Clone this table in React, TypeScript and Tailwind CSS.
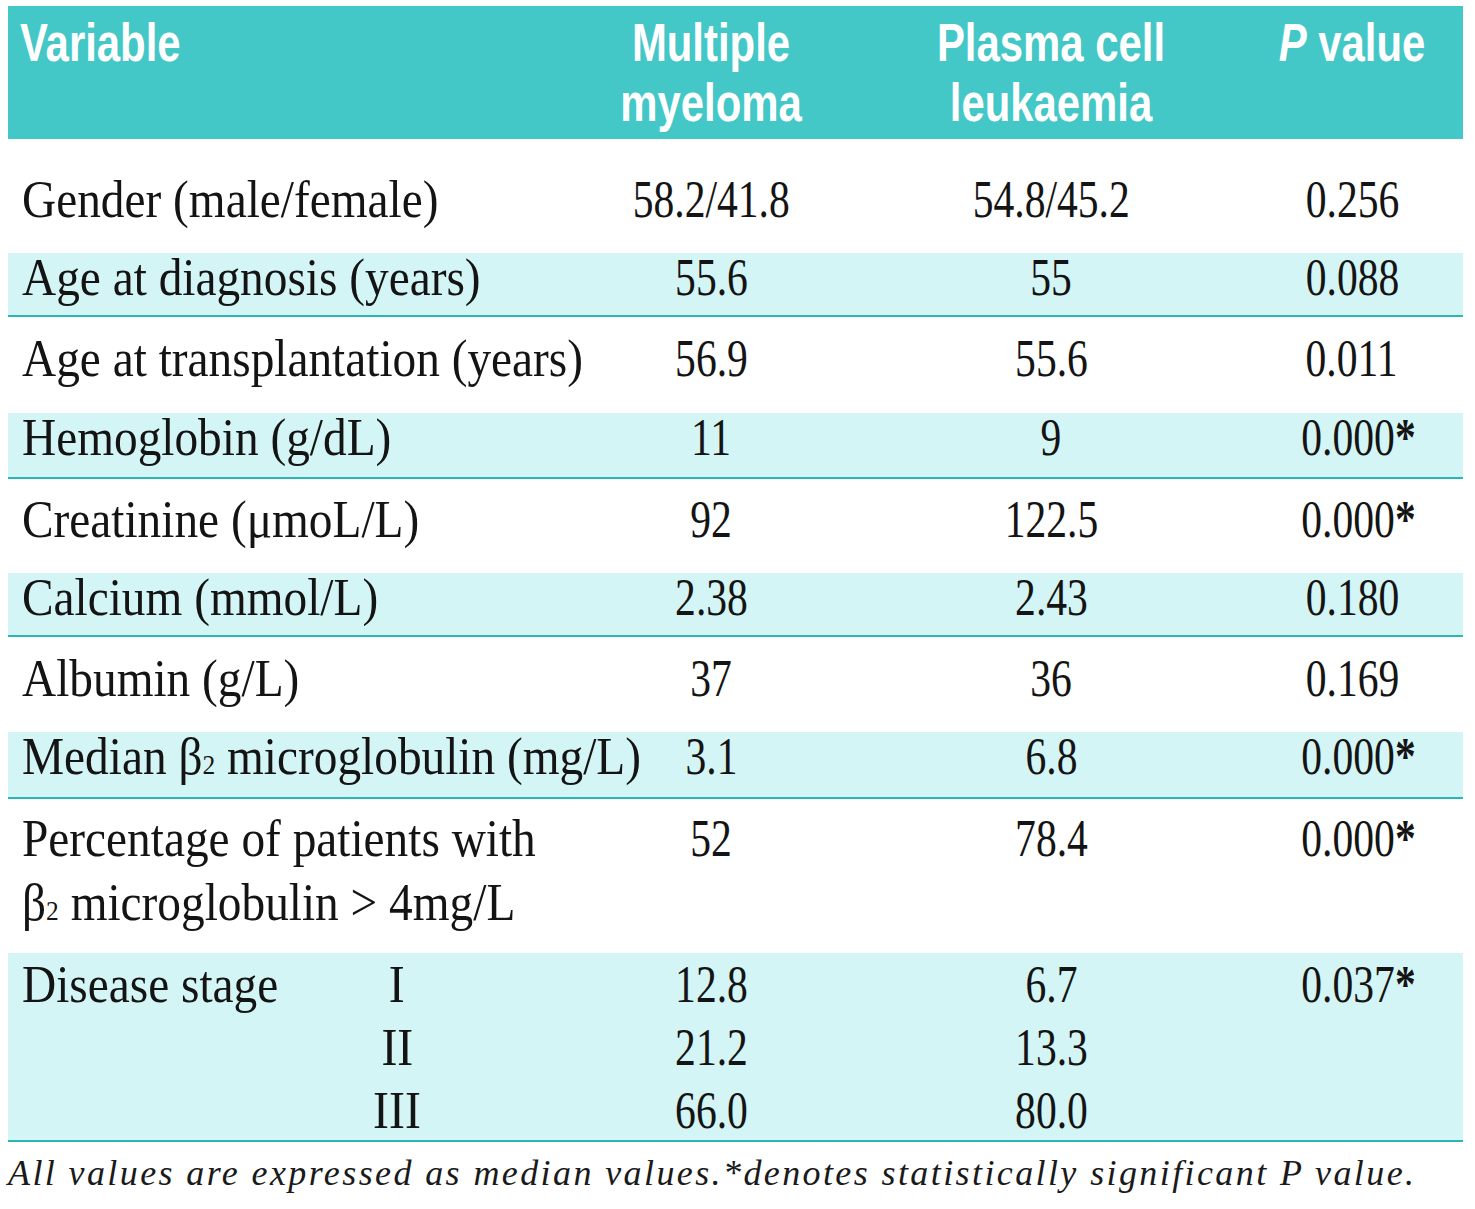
import React from 'react';

type Row = {
    label: React.ReactNode;
    mm: string;
    pcl: string;
    p: string;
    cls: string;
};

const Beta = () => (
    <>
        β<span className="text-[28px]">2</span>
    </>
);

const light = 'bg-[#d4f5f5] border-b-2 border-[#2bb6b6]';

const rows: Row[] = [
    { label: 'Gender (male/female)', mm: '58.2/41.8', pcl: '54.8/45.2', p: '0.256', cls: 'h-[114px] pt-[36px]' },
    { label: 'Age at diagnosis (years)', mm: '55.6', pcl: '55', p: '0.088', cls: `h-[64px] ${light}` },
    { label: 'Age at transplantation (years)', mm: '56.9', pcl: '55.6', p: '0.011', cls: 'h-[96px] pt-[17px]' },
    { label: 'Hemoglobin (g/dL)', mm: '11', pcl: '9', p: '0.000*', cls: `h-[66px] ${light}` },
    { label: 'Creatinine (μmoL/L)', mm: '92', pcl: '122.5', p: '0.000*', cls: 'h-[94px] pt-[16px]' },
    { label: 'Calcium (mmol/L)', mm: '2.38', pcl: '2.43', p: '0.180', cls: `h-[64px] ${light}` },
    { label: 'Albumin (g/L)', mm: '37', pcl: '36', p: '0.169', cls: 'h-[95px] pt-[17px]' },
    {
        label: (
            <>
                Median <Beta /> microglobulin (mg/L)
            </>
        ),
        mm: '3.1',
        pcl: '6.8',
        p: '0.000*',
        cls: `h-[67px] ${light}`,
    },
    {
        label: (
            <>
                Percentage of patients with
                <br />
                <Beta /> microglobulin &gt; 4mg/L
            </>
        ),
        mm: '52',
        pcl: '78.4',
        p: '0.000*',
        cls: 'h-[154px] pt-[8px] leading-[64px]',
    },
];

const cols = 'grid grid-cols-[553px_300px_380px_222px]';
const labelText = 'inline-block origin-left scale-x-[0.91] whitespace-nowrap';
const numText = 'inline-block scale-x-[0.8] whitespace-nowrap';
const headText = 'block scale-x-[0.79] whitespace-nowrap';

// p values: asterisk sits a bit wider than the digits
const PVal = ({ v }: { v: string }) =>
    v.endsWith('*') ? (
        <span className={`${numText} translate-x-[6px]`}>
            {v.slice(0, -1)}
            <span className="font-bold">*</span>
        </span>
    ) : (
        <span className={numText}>{v}</span>
    );

const App: React.FC = () => {
    return (
        <div className="min-h-[1209px] bg-white pt-[6px] pl-[8px]">
            <div className="w-[1455px]">
                {/* header */}
                <div
                    className={`${cols} h-[133px] bg-[#44c7c7] pt-[7px] text-[53px] leading-[60px] font-bold text-white font-['Liberation_Sans',Arial,sans-serif]`}
                >
                    <div className="min-w-0 pl-[12px]">
                        <span className={`${headText} origin-left`}>Variable</span>
                    </div>
                    <div className="min-w-0 text-center">
                        <span className={headText}>Multiple</span>
                        <span className={headText}>myeloma</span>
                    </div>
                    <div className="min-w-0 text-center">
                        <span className={headText}>Plasma cell</span>
                        <span className={headText}>leukaemia</span>
                    </div>
                    <div className="min-w-0 text-center">
                        <span className={headText}>
                            <i>P</i> value
                        </span>
                    </div>
                </div>

                {/* body */}
                <div className="text-[52px] leading-[50px] text-[#141414] font-['Liberation_Serif','Times_New_Roman',serif]">
                    {rows.map((row, i) => (
                        <div key={i} className={`${cols} ${row.cls}`}>
                            <div className="min-w-0 pl-[14px]">
                                <span className={labelText}>{row.label}</span>
                            </div>
                            <div className="min-w-0 text-center">
                                <span className={numText}>{row.mm}</span>
                            </div>
                            <div className="min-w-0 text-center">
                                <span className={numText}>{row.pcl}</span>
                            </div>
                            <div className="min-w-0 text-center">
                                <PVal v={row.p} />
                            </div>
                        </div>
                    ))}

                    {/* disease stage */}
                    <div className={`${cols} h-[189px] leading-[63px] ${light}`}>
                        <div className="grid min-w-0 grid-cols-[335px_80px] pl-[14px]">
                            <div>
                                <span className={labelText}>Disease stage</span>
                            </div>
                            <div className="flex flex-col items-center">
                                <span className="inline-block scale-x-[0.92]">I</span>
                                <span className="inline-block scale-x-[0.92]">II</span>
                                <span className="inline-block scale-x-[0.92]">III</span>
                            </div>
                        </div>
                        <div className="flex min-w-0 flex-col items-center">
                            <span className={numText}>12.8</span>
                            <span className={numText}>21.2</span>
                            <span className={numText}>66.0</span>
                        </div>
                        <div className="flex min-w-0 flex-col items-center">
                            <span className={numText}>6.7</span>
                            <span className={numText}>13.3</span>
                            <span className={numText}>80.0</span>
                        </div>
                        <div className="min-w-0 text-center">
                            <PVal v="0.037*" />
                        </div>
                    </div>
                </div>

                <p className="mt-[11px] whitespace-nowrap text-[36px] leading-[40px] italic tracking-[2.4px] text-[#1a1a1a] font-['Liberation_Serif','Times_New_Roman',serif]">
                    All values are expressed as median values.*denotes statistically significant P value.
                </p>
            </div>
        </div>
    );
};

export default App;
